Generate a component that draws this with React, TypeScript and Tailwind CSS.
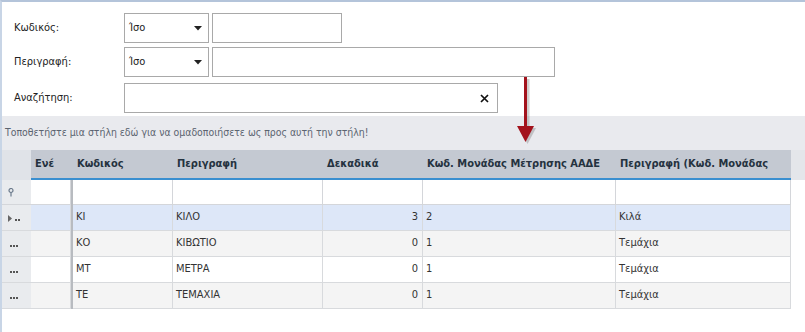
import React from "react";

const font = { fontFamily: '"DejaVu Sans Condensed", "DejaVu Sans", sans-serif' };

function Combo() {
  return (
    <div className="w-[85px] h-[30px] border border-[#a9a9a9] bg-white flex items-center pl-[4px] pr-[6px] text-[11px] text-[#222]">
      <span className="flex-1">Ίσο</span>
      <svg width="8" height="5" viewBox="0 0 8 5"><path d="M0 0 H8 L4 4.5 Z" fill="#222" /></svg>
    </div>
  );
}

const cols = [
  { key: "ene", w: "w-[40px]", label: "Ενέ" },
  { key: "sep", w: "w-[2px]", label: "" },
  { key: "kod", w: "w-[100px]", label: "Κωδικός" },
  { key: "per", w: "w-[150px]", label: "Περιγραφή" },
  { key: "dek", w: "w-[100px]", label: "Δεκαδικά" },
  { key: "aade", w: "w-[193px]", label: "Κωδ. Μονάδας Μέτρησης ΑΑΔΕ" },
  { key: "per2", w: "w-[175px]", label: "Περιγραφή (Κωδ. Μονάδας" },
];

const rows = [
  { kod: "ΚΙ", per: "ΚΙΛΟ", dek: "3", aade: "2", per2: "Κιλά" },
  { kod: "ΚΟ", per: "ΚΙΒΩΤΙΟ", dek: "0", aade: "1", per2: "Τεμάχια" },
  { kod: "ΜΤ", per: "ΜΕΤΡΑ", dek: "0", aade: "1", per2: "Τεμάχια" },
  { kod: "ΤΕ", per: "ΤΕΜΑΧΙΑ", dek: "0", aade: "1", per2: "Τεμάχια" },
];

function Dots({ n }: { n: number }) {
  return (
    <div className="flex gap-[1px]">
      {Array.from({ length: n }).map((_, k) => (
        <div key={k} className="w-[2px] h-[2px] bg-[#555]" />
      ))}
    </div>
  );
}

export default function App() {
  return (
    <div style={font} className="relative w-[805px] h-[332px] bg-white overflow-hidden border-t-2 border-l-2 border-t-[#b4c4da] border-l-[#c8d5e6] text-[11px]">
      {/* Form */}
      <div className="h-[114px] pt-[11px] flex flex-col">
        <div className="flex items-center h-[30px]">
          <div className="w-[122px] pl-[12px] text-[#222]">Κωδικός:</div>
          <Combo />
          <div className="ml-[3px] w-[130px] h-[30px] border border-[#a9a9a9]" />
        </div>
        <div className="flex items-center h-[30px] mt-[4px]">
          <div className="w-[122px] pl-[12px] text-[#222]">Περιγραφή:</div>
          <Combo />
          <div className="ml-[3px] w-[343px] h-[30px] border border-[#a9a9a9]" />
        </div>
        <div className="flex items-center h-[30px] mt-[6px]">
          <div className="w-[122px] pl-[12px] text-[#222]">Αναζήτηση:</div>
          <div className="w-[374px] h-[30px] border border-[#a9a9a9] flex items-center justify-end pr-[8px]">
            <svg width="9" height="9" viewBox="0 0 9 9"><path d="M1 1 L8 8 M8 1 L1 8" stroke="#111" strokeWidth="1.7" /></svg>
          </div>
        </div>
      </div>

      {/* Group panel */}
      <div className="h-[34px] bg-[#e9eaee] flex items-center pl-[3px] text-[10.4px] text-[#5b6470]">
        Τοποθετήστε μια στήλη εδώ για να ομαδοποιήσετε ως προς αυτή την στήλη!
      </div>

      {/* Header */}
      <div className="flex h-[30px] bg-[#e4e6ea]">
        <div className="w-[29px] bg-[#e0e3e8]" />
        <div className="flex border-b-2 border-[#3a8fd0] bg-[#c4c9d2]">
          {cols.map((c) => (
            <div key={c.key} className={`${c.w} h-[28px] flex items-center ${c.key === "sep" ? "" : "pl-[4px]"} font-bold text-[#25323f] whitespace-nowrap overflow-hidden`}>
              {c.label}
            </div>
          ))}
        </div>
      </div>

      {/* Filter row */}
      <div className="flex h-[25px]">
        <div className="w-[29px] bg-[#e9ebee] border-b border-[#d4d6da] flex items-center pl-[6px]">
          <svg width="6" height="9" viewBox="0 0 6 9"><circle cx="3" cy="2.5" r="2" fill="none" stroke="#6b7a8c" strokeWidth="1.2" /><path d="M3 4.5 V8.5" stroke="#6b7a8c" strokeWidth="1.2" /></svg>
        </div>
        {cols.map((c) =>
          c.key === "sep" ? (
            <div key={c.key} className="w-[2px] bg-[#b8bbc0]" />
          ) : (
            <div key={c.key} className={`${c.w} border-r border-b border-[#d4d6da] bg-white`} />
          )
        )}
      </div>

      {/* Data rows */}
      {rows.map((r, i) => {
        const bg = i === 0 ? "bg-[#dde7f8]" : i % 2 === 1 ? "bg-[#f4f4f4]" : "bg-white";
        return (
          <div key={i} className="flex h-[26px] text-[#333]">
            <div className="w-[29px] bg-[#e9ebee] border-b border-[#d8dadd] flex items-center pl-[6px]">
              {i === 0 ? (
                <div className="flex items-end gap-[3px] mt-[1px]">
                  <svg width="4" height="7" viewBox="0 0 4 7"><path d="M0 0 L4 3.5 L0 7 Z" fill="#666" /></svg>
                  <div className="mb-[1px]"><Dots n={2} /></div>
                </div>
              ) : (
                <div className="pl-[2px] mt-[4px]"><Dots n={3} /></div>
              )}
            </div>
            <div className={`w-[40px] border-r border-b border-[#d8dadd] ${bg}`} />
            <div className="w-[2px] bg-[#b8bbc0]" />
            <div className={`w-[100px] border-r border-b border-[#d8dadd] ${bg} flex items-center pl-[3px]`}>{r.kod}</div>
            <div className={`w-[150px] border-r border-b border-[#d8dadd] ${bg} flex items-center pl-[3px]`}>{r.per}</div>
            <div className={`w-[100px] border-r border-b border-[#d8dadd] ${bg} flex items-center justify-end pr-[4px]`}>{r.dek}</div>
            <div className={`w-[193px] border-r border-b border-[#d8dadd] ${bg} flex items-center pl-[3px]`}>{r.aade}</div>
            <div className={`w-[175px] border-r border-b border-[#d8dadd] ${bg} flex items-center pl-[3px]`}>{r.per2}</div>
          </div>
        );
      })}

      {/* Red arrow overlay */}
      <svg className="absolute left-[510px] top-[74px]" width="30" height="70" viewBox="0 0 30 70">
        <g opacity="0.35" fill="#777">
          <rect x="14.5" y="3" width="3" height="50" />
          <path d="M7 52 H24 L15.5 68 Z" />
        </g>
        <rect x="12" y="1" width="3" height="50" fill="#a3121c" />
        <path d="M5 50 H22 L13.5 66 Z" fill="#a3121c" />
      </svg>
    </div>
  );
}
